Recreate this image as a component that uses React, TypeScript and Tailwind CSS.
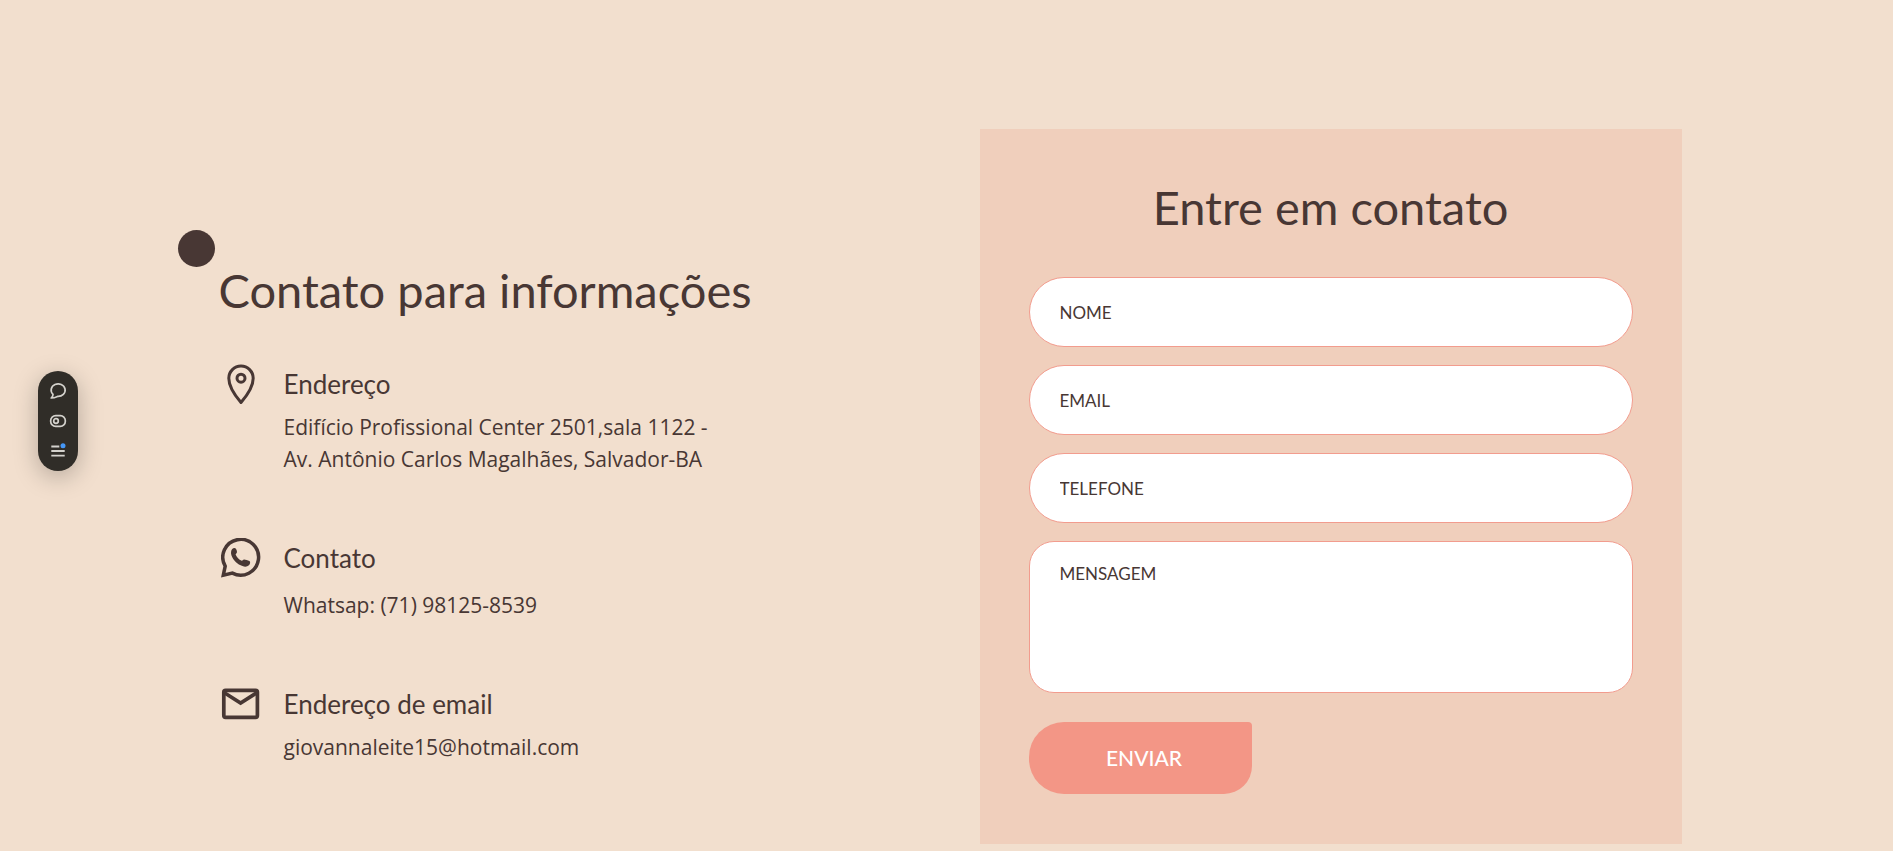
import type { ReactNode } from "react";

function PinIcon() {
  return (
    <svg viewBox="0 0 40 40" className="size-10" fill="none" stroke="currentColor" strokeLinejoin="round" aria-hidden="true">
      <path strokeWidth="3" d="M20 38.5C17 35 7.8 23.5 7.8 14.2a12.2 12.2 0 0 1 24.4 0C32.2 23.5 23 35 20 38.5Z" />
      <circle cx="20" cy="14.2" r="4" strokeWidth="3" />
    </svg>
  );
}

function WhatsappIcon() {
  return (
    <svg viewBox="0 0 40 40" className="size-10" aria-hidden="true">
      <path
        fill="none"
        stroke="currentColor"
        strokeWidth="3.5"
        d="M4.2 28.2A17.9 17.9 0 1 1 11.4 35.1L2.3 37.2Z"
      />
      <path
        fill="currentColor"
        d="M11.2 10.9c1.2-1.2 3-1.4 3.7-.2.8 1.3 1.3 2.9 1 3.9-.2.8-1 1.2-1.3 1.9 1.2 2.7 3.3 5 6.1 6.3.9-.3 1.3-1.3 2.3-1.4 1.3-.1 3.6.8 5.4 1.7 1.3.8.8 3-.5 4.2-1.7 1.6-4.1 1.6-6.4.8-5-1.7-9.3-5.7-11-10.6-.8-2.3-.6-5.2.7-6.6Z"
      />
    </svg>
  );
}

function MailIcon() {
  return (
    <svg viewBox="0 0 40 40" className="size-10" fill="none" stroke="currentColor" strokeWidth="3.7" aria-hidden="true">
      <rect x="2.8" y="6.3" width="33.6" height="27" rx="1.8" />
      <path d="M3 8.5 19.6 19 36.2 8.5" />
    </svg>
  );
}

function ContactItem({ icon, title, className, children }: { icon: ReactNode; title: string; className: string; children: ReactNode }) {
  return (
    <li className="flex gap-[23px]">
      <div className="shrink-0">{icon}</div>
      <div className="min-w-0">
        <h3 className="font-['Lato',sans-serif] text-[26px] leading-10">{title}</h3>
        <div className={`${className} text-[21px] leading-8`}>{children}</div>
      </div>
    </li>
  );
}

const fields = [
  { id: "nome", label: "NOME", type: "text" },
  { id: "email", label: "EMAIL", type: "email" },
  { id: "telefone", label: "TELEFONE", type: "tel" },
];

const fieldStyle =
  "block w-full border border-[#f29c8e] bg-white px-[30px] font-['Lato',sans-serif] text-[17px] text-[#483734] placeholder:text-[#483734] placeholder:opacity-100 outline-none";

export default function App() {
  return (
    <main className="relative min-h-screen bg-[#f2dfce] font-['Open_Sans',sans-serif] text-[#483734]">
      <div className="absolute left-[178px] top-[230px] size-[37px] rounded-full bg-[#483734]" />
      <nav
        aria-label="Atalhos"
        className="absolute left-[38px] top-[371px] flex h-[100px] w-10 flex-col items-center justify-center gap-3 rounded-full bg-[#302d28] text-[#d4d2cd] shadow-[0_6px_24px_rgba(0,0,0,0.25)]"
      >
        <button type="button" aria-label="Comentários" className="block size-[18px]">
          <svg viewBox="0 0 18 18" fill="none" stroke="currentColor" strokeWidth="1.7" strokeLinejoin="round">
            <path d="M4 12.4A7 6.300 0 1 1 8.500 14.4C6.500 15.400 4.500 16 2.200 16 3.300 14.900 4 13.800 4 12.400Z" />
          </svg>
        </button>
        <button type="button" aria-label="Visualização" className="block size-[18px]">
          <svg viewBox="0 0 18 18" fill="none" stroke="currentColor" strokeWidth="1.7">
            <rect x="1.7" y="3.6" width="14.6" height="10.8" rx="5" />
            <circle cx="7" cy="9" r="2.3" />
          </svg>
        </button>
        <button type="button" aria-label="Menu" className="block size-[18px]">
          <svg viewBox="0 0 18 18" fill="none" stroke="currentColor" strokeWidth="1.8">
            <path d="M2.3 4.5h8M2.3 9h13.4M2.3 13.7h13.4" />
            <circle cx="14" cy="3.8" r="2.5" fill="#4597f7" stroke="none" />
          </svg>
        </button>
      </nav>

      <div className="mx-auto grid max-w-[1470px] grid-cols-2 pt-[129px]">
        <section className="pl-[7px] pt-[131px]">
          <h2 className="font-['Lato',sans-serif] text-[47px] leading-[60px]">Contato para informações</h2>
          <ul className="mt-11 flex flex-col gap-[63px] pl-0.5">
            <ContactItem icon={<PinIcon />} title="Endereço" className="mt-[7px]">
              <p>
                Edifício Profissional Center 2501,sala 1122 -
                <br />
                Av. Antônio Carlos Magalhães, Salvador-BA
              </p>
            </ContactItem>
            <ContactItem icon={<WhatsappIcon />} title="Contato" className="mt-[11px]">
              <p>Whatsap: (71) 98125-8539</p>
            </ContactItem>
            <ContactItem icon={<MailIcon />} title="Endereço de email" className="mt-[7px]">
              <p>giovannaleite15@hotmail.com</p>
            </ContactItem>
          </ul>
        </section>

        <section className="ml-[33px] bg-[#f0cfbc] px-[49px] pb-[50px] pt-12">
          <h2 className="text-center font-['Lato',sans-serif] text-[47px] leading-[60px]">Entre em contato</h2>
          <form className="mt-10 flex flex-col gap-[18px]" onSubmit={(e) => e.preventDefault()}>
            {fields.map((f) => (
              <input key={f.id} id={f.id} type={f.type} placeholder={f.label} aria-label={f.label} className={`${fieldStyle} h-[70px] rounded-[35px]`} />
            ))}
            <textarea id="mensagem" placeholder="MENSAGEM" aria-label="MENSAGEM" className={`${fieldStyle} h-[152px] resize-none rounded-[25px] pt-[19px]`} />
            <button
              type="submit"
              className="mt-[11px] h-[72px] w-[223px] self-start rounded-[35px] rounded-tr-[4px] rounded-br-[28px] bg-[#f39686] pl-2 font-['Lato',sans-serif] text-[21px] font-medium text-white"
            >
              ENVIAR
            </button>
          </form>
        </section>
      </div>
    </main>
  );
}
